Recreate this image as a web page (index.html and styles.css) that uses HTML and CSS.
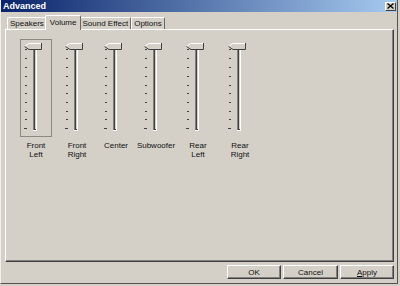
FILE: index.html
```html
<!DOCTYPE html>
<html>
<head>
  <meta charset="UTF-8">
  <title>Advanced</title>
  <link rel="stylesheet" href="styles.css">
</head>
<body>
  <!-- gambar slider dipakai ulang -->
  <svg class="defs" width="0" height="0">
    <symbol id="slider" viewBox="0 0 32 98">
      <rect x="5" y="10" width="2" height="1" fill="#404040"/>
      <rect x="5" y="19" width="2" height="1" fill="#404040"/>
      <rect x="5" y="28" width="2" height="1" fill="#404040"/>
      <rect x="5" y="37" width="2" height="1" fill="#404040"/>
      <rect x="5" y="46" width="2" height="1" fill="#404040"/>
      <rect x="5" y="54" width="2" height="1" fill="#404040"/>
      <rect x="5" y="63" width="2" height="1" fill="#404040"/>
      <rect x="5" y="72" width="2" height="1" fill="#404040"/>
      <rect x="5" y="80" width="2" height="1" fill="#404040"/>
      <rect x="4" y="89" width="3" height="1" fill="#404040"/>
      <rect x="13" y="8" width="4" height="84" fill="#ffffff"/>
      <rect x="13" y="8" width="3" height="83" fill="#808080"/>
      <rect x="14" y="9" width="2" height="82" fill="#404040"/>
      <rect x="15" y="9" width="1" height="81" fill="#d4d0c8"/>
      <polygon points="4,7 9,4 21,4 21,10 9,10" fill="#d4d0c8"/>
      <path d="M4.5 7.5 L8.5 4.5 H21" fill="none" stroke="#ffffff"/>
      <path d="M21.5 4 V10.5 H9 L4.5 7.5" fill="none" stroke="#404040"/>
    </symbol>
  </svg>

  <div class="window">
    <div class="titlebar">
      <span class="title">Advanced</span>
      <span class="close">
        <svg width="7" height="6" viewBox="0 0 7 6"><path d="M0.5 0.5 L6.5 5.5 M6.5 0.5 L0.5 5.5" stroke="#000" stroke-width="1.3"/></svg>
      </span>
    </div>

    <div class="body">
      <!-- Tab -->
      <div class="tabs">
        <div class="tab">Speakers</div>
        <div class="tab active">Volume</div>
        <div class="tab">Sound Effect</div>
        <div class="tab">Options</div>
      </div>

      <!-- Panel volume -->
      <div class="panel">
        <div class="sliders">
          <div class="channel">
            <svg class="slider" width="32" height="98"><rect class="focus" x="0.5" y="0.5" width="31" height="97"/><use href="#slider"/></svg>
            <div class="label">Front<br>Left</div>
          </div>
          <div class="channel">
            <svg class="slider" width="32" height="98"><use href="#slider"/></svg>
            <div class="label">Front<br>Right</div>
          </div>
          <div class="channel">
            <svg class="slider" width="32" height="98"><use href="#slider"/></svg>
            <div class="label">Center</div>
          </div>
          <div class="channel">
            <svg class="slider" width="32" height="98"><use href="#slider"/></svg>
            <div class="label">Subwoofer</div>
          </div>
          <div class="channel">
            <svg class="slider" width="32" height="98"><use href="#slider"/></svg>
            <div class="label">Rear<br>Left</div>
          </div>
          <div class="channel">
            <svg class="slider" width="32" height="98"><use href="#slider"/></svg>
            <div class="label">Rear<br>Right</div>
          </div>
        </div>
      </div>

      <!-- Tombol -->
      <div class="buttons">
        <button class="btn ok">OK</button>
        <button class="btn cancel">Cancel</button>
        <button class="btn apply"><u>A</u>pply</button>
      </div>
    </div>
  </div>
</body>
</html>
```

FILE: styles.css
```css
* {
  box-sizing: border-box;
}

body {
  margin: 0;
  background: #d4d0c8;
  font-family: "Liberation Sans", Arial, sans-serif;
  color: #111;
}

.defs {
  position: absolute;
  width: 0;
  height: 0;
}

.window {
  width: 398px;
  height: 284px;
  border-left: 1px solid #f2f0ec;
  border-right: 1px solid #55544f;
  border-bottom: 1px solid #55544f;
  display: flex;
  flex-direction: column;
}

/* Title bar */
.titlebar {
  height: 12px;
  background: linear-gradient(to right, #0a246a, #a6caf0);
  display: flex;
  align-items: center;
  justify-content: space-between;
  padding: 0 1px 0 2px;
}

.title {
  color: #fff;
  font-weight: bold;
  font-size: 9px;
  line-height: 12px;
}

.close {
  width: 11px;
  height: 9px;
  background: #d4d0c8;
  border: 1px solid;
  border-color: #fff #404040 #404040 #fff;
  display: flex;
  align-items: center;
  justify-content: center;
}

.close svg {
  display: block;
}

.body {
  flex: 1;
  display: flex;
  flex-direction: column;
  padding: 3px 3px 4px 4px;
}

/* Tabs */
.tabs {
  height: 14px;
  display: flex;
  align-items: flex-end;
  padding-left: 2px;
}

.tab {
  height: 12px;
  font-size: 8px;
  line-height: 11px;
  padding: 0 2px;
  border: 1px solid;
  border-bottom: none;
  border-color: #fff #6a6862 #6a6862 #fff;
  border-radius: 2px 2px 0 0;
  white-space: nowrap;
}

.tab.active {
  height: 15px;
  margin: 0 -2px -1px;
  padding: 1px 4px 0;
  background: #d4d0c8;
  position: relative;
  z-index: 1;
}

/* Panel */
.panel {
  flex: 1;
  border: 1px solid;
  border-color: #fff #404040 #404040 #fff;
  box-shadow: inset -1px -1px #808080;
  padding: 9px 0 0 9px;
}

.sliders {
  display: grid;
  grid-template-columns: 42px 40px 38px 42px 42px 42px;
}

.channel {
  display: flex;
  flex-direction: column;
  align-items: center;
}

.slider {
  display: block;
}

.focus {
  fill: none;
  stroke: #8d8a83;
}

.label {
  margin-top: 4px;
  font-size: 8px;
  line-height: 9px;
  text-align: center;
  white-space: nowrap;
}

/* Tombol */
.buttons {
  height: 14px;
  margin-top: 3px;
  display: flex;
  justify-content: flex-end;
  gap: 2px;
}

.btn {
  height: 14px;
  padding: 0;
  font-family: "Liberation Sans", Arial, sans-serif;
  font-size: 8px;
  color: #111;
  background: #d4d0c8;
  border: 1px solid;
  border-color: #fff #404040 #404040 #fff;
  box-shadow: inset -1px -1px #808080;
  border-radius: 0;
}

.ok {
  width: 54px;
}

.cancel {
  width: 55px;
}

.apply {
  width: 54px;
}
```
